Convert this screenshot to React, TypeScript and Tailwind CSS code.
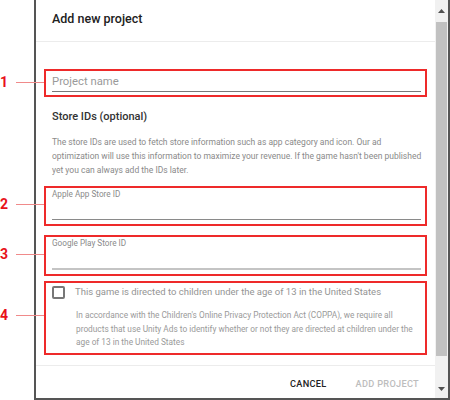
import React from "react";

const font = { fontFamily: "Roboto, 'Liberation Sans', sans-serif" };

function Callout({ n, top }: { n: number; top: number }) {
  return (
    <div className="absolute left-0 flex items-center" style={{ top: top - 8 }}>
      <span className="w-[12px] text-[14px] leading-[16px] font-bold text-[#e8111a]">{n}</span>
      <span className="ml-[4px] h-px w-[28px] bg-[#f08a8a]" />
    </div>
  );
}

export default function App() {
  return (
    <div className="relative h-[400px] w-[450px] bg-white" style={font}>
      <div className="ml-[34px] flex h-[400px] border-x-2 border-b-2 border-[#555]">
        <div className="flex flex-1 flex-col">
          <div className="h-[42px] border-b border-[#ececec] pl-[16px] pt-[11px] text-[12.5px] font-medium leading-[16px] text-[#212121]">
            Add new project
          </div>

          <div className="flex-1">
            <div className="mx-[8px] mt-[27px] h-[28px] border-2 border-[#ee2a2a] pl-[6px] pr-[4px] pt-[3px]">
              <div className="text-[11.3px] leading-[15px] text-[#9a9a9a]">Project name</div>
              <div className="mt-[2px] h-px bg-[#777]" />
            </div>

            <div className="mt-[13px] pl-[16px] text-[11px] font-medium leading-[14px] text-[#333]">
              Store IDs (optional)
            </div>
            <p className="mt-[11px] whitespace-nowrap pl-[16px] text-[8.5px] leading-[14px] text-[#8a8a8a]">
              The store IDs are used to fetch store information such as app category and icon. Our ad
              <br />
              optimization will use this information to maximize your revenue. If the game hasn't been published
              <br />
              yet you can always add the IDs later.
            </p>

            <div className="mx-[8px] mt-[9px] h-[40px] border-2 border-[#ee2a2a] pl-[6px] pr-[4px]">
              <div className="text-[8.2px] leading-[12px] text-[#8a8a8a]">Apple App Store ID</div>
              <div className="mt-[19px] h-px bg-[#8a8a8a]" />
            </div>
            <div className="mx-[8px] mt-[9px] h-[41px] border-2 border-[#ee2a2a] pl-[6px] pr-[4px]">
              <div className="text-[8.2px] leading-[12px] text-[#8a8a8a]">Google Play Store ID</div>
              <div className="mt-[19px] h-[2px] bg-[#c4c4c4]" />
            </div>

            <div className="mx-[8px] mt-[5px] h-[74px] border-2 border-[#ee2a2a] pl-[6px] pr-[4px] pt-[2px]">
              <div className="flex items-center">
                <span className="h-[13px] w-[13px] rounded-[2px] border-2 border-[#777]" />
                <span className="ml-[10px] text-[9.5px] leading-[14px] text-[#949494]">
                  This game is directed to children under the age of 13 in the United States
                </span>
              </div>
              <p className="mt-[10px] pl-[24px] text-[8.3px] leading-[13.5px] text-[#9a9a9a]">
                In accordance with the Children's Online Privacy Protection Act (COPPA), we require all products
                that use Unity Ads to identify whether or not they are directed at children under the age of 13 in
                the United States
              </p>
            </div>
          </div>

          <div className="flex h-[33px] items-center justify-end gap-[29px] border-t border-[#ececec] pr-[16px] pt-[4px] text-[9.2px] font-medium uppercase tracking-[0.3px]">
            <span className="text-[#222]">Cancel</span>
            <span className="text-[#bdbdbd]">Add project</span>
          </div>
        </div>

        <div className="flex w-[13px] flex-col bg-[#f1f1f1]">
          <div className="flex h-[22px] items-center justify-center">
            <svg width="7" height="4" viewBox="0 0 7 4"><path d="M0 4 L3.5 0 L7 4 Z" fill="#505050" /></svg>
          </div>
          <div className="mx-px flex-1 bg-[#c1c1c1]" />
          <div className="flex h-[42px] items-end justify-center pb-[7px]">
            <svg width="7" height="4" viewBox="0 0 7 4"><path d="M0 0 L3.5 4 L7 0 Z" fill="#505050" /></svg>
          </div>
        </div>
      </div>

      <Callout n={1} top={82} />
      <Callout n={2} top={204} />
      <Callout n={3} top={254} />
      <Callout n={4} top={315} />
    </div>
  );
}
